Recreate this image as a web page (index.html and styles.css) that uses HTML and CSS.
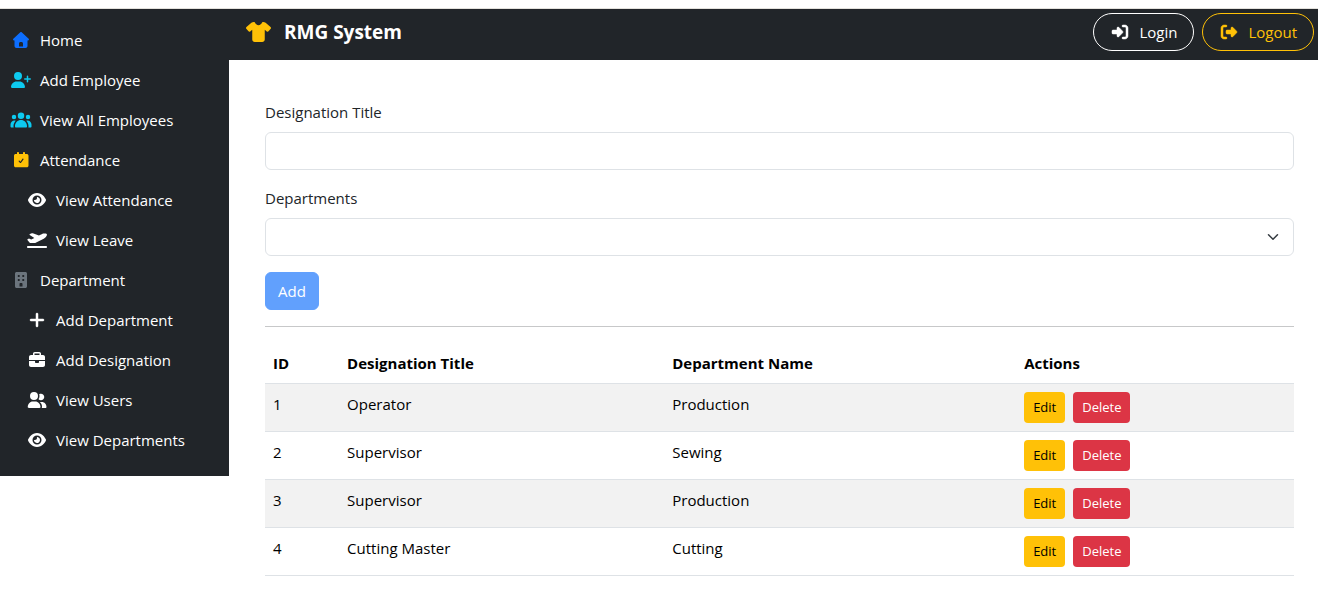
FILE: index.html
```html
<!DOCTYPE html>
<html lang="en">
<head>
<meta charset="utf-8">
<meta name="viewport" content="width=device-width, initial-scale=1">
<title>RMG System</title>
<link rel="stylesheet" href="styles.css">
</head>
<body>
<svg class="sprite" aria-hidden="true">
  <symbol id="eye" viewBox="0 0 576 512"><path d="M288 32c-80.800 0-145.500 36.800-192.600 80.600C48.600 156 17.300 208 2.500 243.700c-3.300 7.900-3.300 16.700 0 24.600C17.300 304 48.600 356 95.400 399.400C142.500 443.200 207.200 480 288 480s145.500-36.800 192.600-80.600c46.800-43.500 78.100-95.400 93-131.100c3.300-7.900 3.300-16.700 0-24.600c-14.900-35.700-46.200-87.700-93-131.100C433.500 68.800 368.800 32 288 32zM144 256a144 144 0 1 1 288 0 144 144 0 1 1 -288 0zm144-64c0 35.300-28.700 64-64 64c-7.100 0-13.900-1.200-20.300-3.300c-5.500-1.800-11.900 1.600-11.700 7.400c.3 6.900 1.300 13.800 3.200 20.700c13.700 51.200 66.400 81.600 117.600 67.900s81.600-66.400 67.900-117.600c-11.100-41.500-47.800-69.400-88.600-71.100c-5.800-.2-9.200 6.100-7.400 11.700c2.100 6.400 3.300 13.200 3.300 20.300z"/></symbol>
</svg>
<div class="page">
  <nav class="sidebar" aria-label="Main">
    <a class="link" href="#"><svg class="icon blue" viewBox="0 0 512 512"><path d="M277.800 8.600c-12.300-11.400-31.300-11.400-43.500 0l-224 208c-9.600 9-12.800 22.900-8 35.100S18.800 272 32 272l16 0 0 176c0 35.300 28.700 64 64 64l288 0c35.300 0 64-28.700 64-64l0-176 16 0c13.200 0 25-8.100 29.800-20.300s1.600-26.200-8-35.100l-224-208zM240 320l32 0c26.500 0 48 21.500 48 48l0 96-128 0 0-96c0-26.500 21.500-48 48-48z"/></svg>Home</a>
    <a class="link" href="#"><svg class="icon cyan" viewBox="0 0 640 512"><path d="M96 128a128 128 0 1 1 256 0A128 128 0 1 1 96 128zM0 482.300C0 383.800 79.800 304 178.300 304h91.400C368.200 304 448 383.800 448 482.300c0 16.400-13.300 29.700-29.700 29.700H29.700C13.300 512 0 498.700 0 482.300zM504 312V248H440c-13.300 0-24-10.700-24-24s10.700-24 24-24h64V136c0-13.300 10.700-24 24-24s24 10.700 24 24v64h64c13.300 0 24 10.700 24 24s-10.700 24-24 24H552v64c0 13.300-10.700 24-24 24s-24-10.700-24-24z"/></svg>Add Employee</a>
    <a class="link" href="#"><svg class="icon cyan" viewBox="0 0 640 512"><path d="M320 16a104 104 0 1 1 0 208 104 104 0 1 1 0-208zM96 88a72 72 0 1 1 0 144 72 72 0 1 1 0-144zM544 88a72 72 0 1 1 0 144 72 72 0 1 1 0-144zM128 448c0-106 86-192 192-192s192 86 192 192v16c0 18-14 32-32 32H160c-18 0-32-14-32-32zM-16 400c0-71 57-128 128-128 13 0 25 2 37 5.500C109 322 80 383 80 448v16c0 11 2 22 7 32H16c-18 0-32-14-32-32zM553 496c4-10 7-21 7-32v-16c0-65-29-126-69-170.500 12-3.500 24-5.500 37-5.500 71 0 128 57 128 128v64c0 18-14 32-32 32z"/></svg>View All Employees</a>
    <a class="link" href="#"><svg class="icon amber" viewBox="0 0 448 512"><path fill-rule="evenodd" d="M128 0c18 0 32 14 32 32v32h128V32c0-18 14-32 32-32s32 14 32 32v32h48c35 0 64 22 64 56v312c0 35-22 56-56 56H56c-35 0-56-22-56-56V120c0-34 22-56 56-56h40V32c0-18 14-32 32-32zM298 214c-9-6-20-4-26 4l-66 90-28-28c-7-7-19-7-26 0s-7 19 0 26l43 43c9 9 23 7 30-3l78-106c6-8 4-20-5-26z"/></svg>Attendance</a>
    <a class="link sub" href="#"><svg class="icon"><use href="#eye"/></svg>View Attendance</a>
    <a class="link sub" href="#"><svg class="icon" viewBox="0 0 640 512"><path d="M381 114.900L186.100 41.800c-16.700-6.200-35.200-5.300-51.100 2.700L89.100 67.400C78 73 77.200 88.500 87.600 95.200l146.900 94.500L136 240 77.800 214.100c-8.700-3.900-18.800-3.700-27.300 .6L18.300 230.800c-9.300 4.700-11.800 16.800-5 24.700l73.100 85.300c6.100 7.100 15 11.200 24.300 11.200H248.400c5 0 9.900-1.200 14.300-3.400L535.600 212.200c46.500-23.300 82.500-63.300 100.800-112C645.900 75 627.200 48 600.200 48H542.800c-20.200 0-40.200 4.800-58.200 14L381 114.900zM0 480c0 17.700 14.300 32 32 32H608c17.700 0 32-14.300 32-32s-14.300-32-32-32H32c-17.700 0-32 14.300-32 32z"/></svg>View Leave</a>
    <a class="link" href="#"><svg class="icon gray" viewBox="0 0 384 512"><path fill-rule="evenodd" d="M56 0h272c35 0 56 22 56 56v400c0 35-22 56-56 56H56c-35 0-56-22-56-56V56C0 21 22 0 56 0zM104 96c-9 0-16 7-16 16v32c0 9 7 16 16 16h32c9 0 16-7 16-16v-32c0-9-7-16-16-16zM248 96c-9 0-16 7-16 16v32c0 9 7 16 16 16h32c9 0 16-7 16-16v-32c0-9-7-16-16-16zM104 224c-9 0-16 7-16 16v32c0 9 7 16 16 16h32c9 0 16-7 16-16v-32c0-9-7-16-16-16zM248 224c-9 0-16 7-16 16v32c0 9 7 16 16 16h32c9 0 16-7 16-16v-32c0-9-7-16-16-16zM176 352c-18 0-32 14-32 32v80h96v-80c0-18-14-32-32-32z"/></svg>Department</a>
    <a class="link sub" href="#"><svg class="icon bold" viewBox="0 0 448 512"><path d="M256 64c0-17.700-14.300-32-32-32s-32 14.300-32 32V224H32c-17.700 0-32 14.300-32 32s14.300 32 32 32H192V448c0 17.700 14.300 32 32 32s32-14.300 32-32V288H416c17.700 0 32-14.300 32-32s-14.300-32-32-32H256V64z"/></svg>Add Department</a>
    <a class="link sub" href="#"><svg class="icon" viewBox="0 0 512 512"><path d="M184 48H328c4.400 0 8 3.600 8 8V96H176V56c0-4.400 3.600-8 8-8zm-56 8V96H64C28.700 96 0 124.700 0 160v96H192 320 512V160c0-35.300-28.700-64-64-64H384V56c0-30.900-25.100-56-56-56H184c-30.900 0-56 25.100-56 56zM512 288H320v32c0 17.700-14.300 32-32 32H224c-17.700 0-32-14.300-32-32V288H0V416c0 35.300 28.700 64 64 64H448c35.300 0 64-28.700 64-64V288z"/></svg>Add Designation</a>
    <a class="link sub" href="#"><svg class="icon" viewBox="0 0 640 512"><path d="M96 128a128 128 0 1 1 256 0A128 128 0 1 1 96 128zM24 482.300C24 383.800 94 304 184 304h80C358 304 432 383.800 432 482.300c0 16.400-13.300 29.700-29.700 29.700H53.700C37.300 512 24 498.700 24 482.300zM594 512H471.400c5.400-9.400 8.600-20.300 8.600-32v-8c0-60.700-27.100-115.200-69.800-151.800c2.400-.1 4.700-.2 7.100-.2h61.400C560 320 624 392.200 624 481.300c0 17-13.800 30.700-30.700 30.700zM448 264c-31 0-59-12.600-79.300-32.900C388.400 200 400 163.600 400 128c0-20-4-40-11-58C406 60 426 56 448 56c57 0 104 46 104 104s-47 104-104 104z"/></svg>View Users</a>
    <a class="link sub" href="#"><svg class="icon"><use href="#eye"/></svg>View Departments</a>
  </nav>
  <div class="body">
    <header class="topbar">
      <a class="brand" href="#"><svg class="logo amber" viewBox="0 0 640 512"><path d="M211.800 0c7.800 0 14.300 5.700 16.700 13.200C240.800 51.900 277.100 80 320 80s79.200-28.100 91.500-66.800C413.900 5.700 420.400 0 428.200 0h12.600c22.500 0 44.200 7.900 61.500 22.300L628.500 127.400c6.600 5.500 10.700 13.500 11.400 22.100s-2.100 17.100-7.800 23.600l-56 64c-11.400 13.100-31.200 14.600-44.600 3.500L480 197.700V448c0 35.300-28.700 64-64 64H224c-35.300 0-64-28.700-64-64V197.700l-51.500 42.900c-13.300 11.100-33.100 9.600-44.600-3.500l-56-64c-5.700-6.500-8.500-15-7.800-23.600s4.800-16.600 11.400-22.100L137.700 22.300C155 7.900 176.700 0 199.200 0h12.600z"/></svg>RMG System</a>
      <div class="account">
        <button class="pill" type="button"><svg class="icon bold" viewBox="0 0 512 512"><path d="M217.900 105.900L340.700 228.700c7.200 7.200 11.300 17.100 11.300 27.300s-4.100 20.100-11.300 27.300L217.900 406.100c-6.400 6.400-15 9.900-24 9.900c-18.700 0-33.900-15.200-33.900-33.900l0-62.100L32 320c-17.700 0-32-14.300-32-32l0-64c0-17.700 14.300-32 32-32l128 0 0-62.100c0-18.700 15.200-33.900 33.900-33.900c9 0 17.600 3.600 24 9.900zM352 416l64 0c17.700 0 32-14.300 32-32l0-256c0-17.700-14.300-32-32-32l-64 0c-17.700 0-32-14.300-32-32s14.300-32 32-32l64 0c53 0 96 43 96 96l0 256c0 53-43 96-96 96l-64 0c-17.700 0-32-14.300-32-32s14.300-32 32-32z"/></svg>Login</button>
        <button class="pill amber" type="button"><svg class="icon bold" viewBox="0 0 512 512"><path d="M377.900 105.900L500.700 228.700c7.200 7.200 11.300 17.100 11.300 27.300s-4.100 20.100-11.300 27.300L377.900 406.100c-6.400 6.400-15 9.900-24 9.900c-18.700 0-33.900-15.200-33.900-33.900l0-62.100-128 0c-17.700 0-32-14.300-32-32l0-64c0-17.700 14.300-32 32-32l128 0 0-62.100c0-18.700 15.200-33.900 33.900-33.900c9 0 17.600 3.600 24 9.900zM160 96L96 96c-17.700 0-32 14.300-32 32l0 256c0 17.700 14.300 32 32 32l64 0c17.700 0 32 14.300 32 32s-14.300 32-32 32l-64 0c-53 0-96-43-96-96L0 128C0 75 43 32 96 32l64 0c17.700 0 32 14.300 32 32s-14.300 32-32 32z"/></svg>Logout</button>
      </div>
    </header>
    <main class="content">
      <form class="form">
        <div class="field">
          <label for="title">Designation Title</label>
          <input class="control" id="title" type="text">
        </div>
        <div class="field">
          <label for="department">Departments</label>
          <div class="select-wrap">
            <select class="control" id="department"><option value=""></option><option>Production</option><option>Sewing</option><option>Cutting</option></select>
            <svg class="chevron" viewBox="0 0 16 16" aria-hidden="true"><path d="m2 5 6 6 6-6"/></svg>
          </div>
        </div>
        <button class="add" type="submit" disabled>Add</button>
      </form>
      <hr class="rule">
      <table class="table">
        <thead>
          <tr><th class="col-id">ID</th><th class="col-title">Designation Title</th><th class="col-dept">Department Name</th><th>Actions</th></tr>
        </thead>
        <tbody>
          <tr><td>1</td><td>Operator</td><td>Production</td><td><div class="actions"><button class="small edit" type="button">Edit</button><button class="small delete" type="button">Delete</button></div></td></tr>
          <tr><td>2</td><td>Supervisor</td><td>Sewing</td><td><div class="actions"><button class="small edit" type="button">Edit</button><button class="small delete" type="button">Delete</button></div></td></tr>
          <tr><td>3</td><td>Supervisor</td><td>Production</td><td><div class="actions"><button class="small edit" type="button">Edit</button><button class="small delete" type="button">Delete</button></div></td></tr>
          <tr><td>4</td><td>Cutting Master</td><td>Cutting</td><td><div class="actions"><button class="small edit" type="button">Edit</button><button class="small delete" type="button">Delete</button></div></td></tr>
        </tbody>
      </table>
    </main>
  </div>
</div>
</body>
</html>
```
FILE: styles.css
```css
* { box-sizing: border-box; }

body {
  margin: 0;
  padding-top: 8px;
  background: #fff;
  color: #212529;
  font: 15px/24px "Segoe UI", "Open Sans", "Noto Sans", sans-serif;
}

button, input, select { font: inherit; }

.sprite { display: none; }

.page {
  display: grid;
  grid-template-columns: 229px minmax(0, 1fr);
  align-items: start;
  border-top: 1px solid #e3e1dc;
}

.sidebar {
  display: flex;
  flex-direction: column;
  padding: 11px 0 16px;
  background: #212529;
}

.link {
  display: flex;
  align-items: center;
  gap: 9px;
  padding: 8px 11px;
  color: #fff;
  text-decoration: none;
}

.sub { padding-left: 27px; }

.icon {
  flex: none;
  width: 20px;
  height: 16px;
  overflow: visible;
  fill: currentColor;
}

.bold {
  stroke: currentColor;
  stroke-width: 16;
}

.blue { color: #0d6efd; }
.cyan { color: #0dcaf0; }
.amber { color: #ffc107; }
.gray { color: #6c757d; }

.topbar {
  display: flex;
  align-items: center;
  justify-content: space-between;
  padding: 4px 4px 9px 17px;
  background: #212529;
}

.brand {
  display: flex;
  align-items: center;
  gap: 13px;
  color: #fff;
  font-size: 19px;
  font-weight: 700;
  text-decoration: none;
}

.logo {
  width: 25px;
  height: 20px;
  fill: #ffc107;
}

.account { display: flex; gap: 8px; }

.pill {
  display: flex;
  align-items: center;
  gap: 9px;
  padding: 6px 16px;
  border: 1px solid currentColor;
  border-radius: 50px;
  background: transparent;
  color: #fff;
}

.pill.amber { color: #ffc107; }

.content { padding: 40px 24px 22px 36px; }

.form {
  display: flex;
  flex-direction: column;
  align-items: flex-start;
  gap: 16px;
}

.field {
  display: flex;
  flex-direction: column;
  gap: 8px;
  width: 100%;
}

.control {
  display: block;
  width: 100%;
  height: 38px;
  padding: 6px 12px;
  border: 1px solid #dee2e6;
  border-radius: 6px;
  background: #fff;
  color: #212529;
  appearance: none;
}

.select-wrap { position: relative; }

.chevron {
  position: absolute;
  top: 13px;
  right: 15px;
  width: 12px;
  height: 12px;
  fill: none;
  stroke: #343a40;
  stroke-width: 2;
  stroke-linecap: round;
  stroke-linejoin: round;
  pointer-events: none;
}

.add {
  padding: 6px 12px;
  border: 1px solid #0d6efd;
  border-radius: 6px;
  background: #0d6efd;
  color: #fff;
  font-weight: 500;
  opacity: 0.65;
}

.rule {
  margin: 16px 0;
  border: 0;
  border-top: 1px solid #c7c8c9;
}

.table {
  width: 100%;
  border-collapse: separate;
  border-spacing: 0;
  table-layout: fixed;
  color: #000;
}

.table th,
.table td {
  padding: 8px;
  border-bottom: 1px solid #dee2e6;
  text-align: left;
  vertical-align: top;
}

.table th { font-weight: 700; }
.table tbody tr:nth-child(odd) { background: #f2f2f2; }

.col-id { width: 7.2%; }
.col-title { width: 31.6%; }
.col-dept { width: 34.2%; }

.actions { display: flex; gap: 8px; }

.small {
  padding: 4px 8px;
  border: 1px solid transparent;
  border-radius: 4px;
  font-size: 13px;
  line-height: 21px;
}

.edit { background: #ffc107; color: #000; }
.delete { background: #dc3545; color: #fff; }
```
